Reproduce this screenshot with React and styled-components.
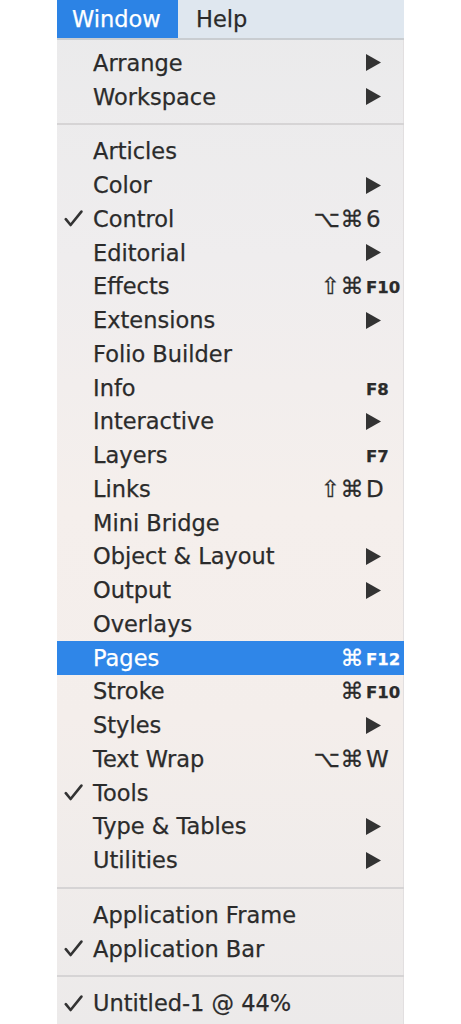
import React from "react";
import styled, { createGlobalStyle } from "styled-components";

const Global = createGlobalStyle`
  html, body { margin: 0; padding: 0; background: #ffffff; }
  body { font-family: "DejaVu Sans", "Liberation Sans", sans-serif; }
`;

const Page = styled.div`
  width: 461px;
  height: 1024px;
  overflow: hidden;
  padding-left: 57px;
  box-sizing: border-box;
`;

const Panel = styled.div`
  width: 347px;
  height: 1024px;
  display: flex;
  flex-direction: column;
  background: linear-gradient(180deg, #eaeaeb 0%, #efedee 25%, #f5efec 50%, #f4eeeb 70%, #eceaea 100%);
  box-shadow: inset -1px 0 0 #e2dfe0;
`;

const MenuBar = styled.div`
  height: 38px;
  display: flex;
  align-items: stretch;
  background: #dfe7ef;
  border-bottom: 2px solid #c9cdd1;
`;

const BarItem = styled.div`
  display: flex;
  align-items: center;
  padding: 0 ${(p) => (p.$active ? "15px" : "18px")};
  width: ${(p) => (p.$active ? "121px" : "auto")};
  box-sizing: border-box;
  font-size: 22.5px;
  -webkit-text-stroke: 0.25px currentColor;
  color: ${(p) => (p.$active ? "#ffffff" : "#2a2a2a")};
  background: ${(p) => (p.$active ? "#2c83e5" : "transparent")};
`;

const List = styled.div`
  display: flex;
  flex-direction: column;
  padding-top: 6px;
`;

const Row = styled.div`
  height: 33.76px;
  display: grid;
  grid-template-columns: 36px 1fr 58px 38px;
  align-items: center;
  font-size: 22.5px;
  -webkit-text-stroke: 0.25px currentColor;
  color: ${(p) => (p.$hl ? "#ffffff" : "#2b2b2b")};
  background: ${(p) => (p.$hl ? "#2f86e8" : "transparent")};
`;

const Check = styled.span`
  display: flex;
  justify-content: flex-start;
  padding-left: 7px;
  svg { display: block; }
`;

const Label = styled.span`
  white-space: nowrap;
`;

const Mods = styled.span`
  text-align: right;
  padding-right: 2px;
  font-size: 23px;
  white-space: nowrap;
  letter-spacing: 0.5px;
`;

const Key = styled.span`
  font-size: ${(p) => (p.$small ? "16.5px" : "23px")};
  font-weight: ${(p) => (p.$small ? "600" : "400")};
  white-space: nowrap;
  padding-top: ${(p) => (p.$small ? "3px" : "0")};
`;

const Arrow = styled.span`
  display: flex;
  justify-content: flex-start;
  svg { display: block; }
`;

const Sep = styled.div`
  height: 21px;
  display: flex;
  align-items: center;
  &::after {
    content: "";
    flex: 1;
    height: 2px;
    background: #d6d4d5;
  }
`;

const Tri = ({ color }) => (
  <svg width="15" height="17" viewBox="0 0 15 17">
    <path d="M0 0 L15 8.5 L0 17 Z" fill={color} />
  </svg>
);

const Tick = ({ color }) => (
  <svg width="19" height="17" viewBox="0 0 19 17">
    <path
      d="M1.8 9.2 L6.6 15 L17.4 1.6"
      fill="none"
      stroke={color}
      strokeWidth="2.6"
      strokeLinecap="round"
      strokeLinejoin="round"
    />
  </svg>
);

const groups = [
  [
    { label: "Arrange", sub: true },
    { label: "Workspace", sub: true },
  ],
  [
    { label: "Articles" },
    { label: "Color", sub: true },
    { label: "Control", check: true, mods: "⌥⌘", key: "6" },
    { label: "Editorial", sub: true },
    { label: "Effects", mods: "⇧⌘", key: "F10", small: true },
    { label: "Extensions", sub: true },
    { label: "Folio Builder" },
    { label: "Info", key: "F8", small: true },
    { label: "Interactive", sub: true },
    { label: "Layers", key: "F7", small: true },
    { label: "Links", mods: "⇧⌘", key: "D" },
    { label: "Mini Bridge" },
    { label: "Object & Layout", sub: true },
    { label: "Output", sub: true },
    { label: "Overlays" },
    { label: "Pages", mods: "⌘", key: "F12", small: true, hl: true },
    { label: "Stroke", mods: "⌘", key: "F10", small: true },
    { label: "Styles", sub: true },
    { label: "Text Wrap", mods: "⌥⌘", key: "W" },
    { label: "Tools", check: true },
    { label: "Type & Tables", sub: true },
    { label: "Utilities", sub: true },
  ],
  [
    { label: "Application Frame" },
    { label: "Application Bar", check: true },
  ],
  [{ label: "Untitled-1 @ 44%", check: true }],
];

const Item = ({ it }) => {
  const fg = it.hl ? "#ffffff" : "#333333";
  return (
    <Row $hl={it.hl}>
      <Check>{it.check ? <Tick color={fg} /> : null}</Check>
      <Label>{it.label}</Label>
      {it.sub ? (
        <>
          <span />
          <Arrow>
            <Tri color={fg} />
          </Arrow>
        </>
      ) : (
        <>
          <Mods>{it.mods || ""}</Mods>
          <Key $small={it.small}>{it.key || ""}</Key>
        </>
      )}
    </Row>
  );
};

export default function App() {
  return (
    <Page>
      <Global />
      <Panel>
        <MenuBar>
          <BarItem $active>Window</BarItem>
          <BarItem>Help</BarItem>
        </MenuBar>
        <List>
          {groups.map((g, gi) => (
            <React.Fragment key={gi}>
              {gi > 0 && <Sep />}
              {g.map((it) => (
                <Item key={it.label} it={it} />
              ))}
            </React.Fragment>
          ))}
        </List>
      </Panel>
    </Page>
  );
}
